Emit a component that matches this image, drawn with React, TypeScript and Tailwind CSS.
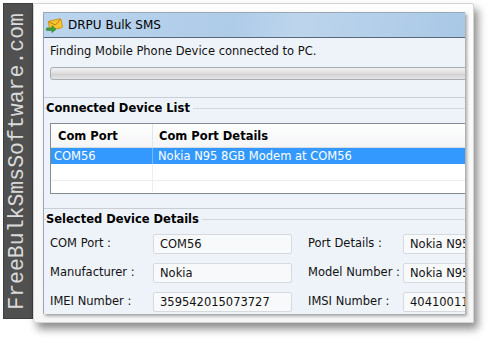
// DRPU Bulk SMS: device detection dialog, shown in a framed screenshot card
// with the vertical site watermark strip on the left.

const UI_FONT = "font-['DejaVu_Sans',Verdana,sans-serif]";

const DETAILS = [
  { left: 'COM Port :', leftValue: 'COM56', right: 'Port Details :', rightValue: 'Nokia N95' },
  { left: 'Manufacturer :', leftValue: 'Nokia', right: 'Model Number :', rightValue: 'Nokia N95' },
  { left: 'IMEI Number :', leftValue: '359542015073727', right: 'IMSI Number :', rightValue: '40410011' },
];

function AppIcon() {
  return (
    <svg width="17" height="15" viewBox="0 0 17 15" className="shrink-0">
      <g transform="rotate(-12 9 7)">
        <rect x="3" y="2" width="13" height="9" rx="1" fill="#f7c531" stroke="#c98a10" strokeWidth="0.8" />
        <path d="M3.4 2.4 L9.5 7.2 L15.6 2.4" fill="none" stroke="#b87a0c" strokeWidth="0.9" />
      </g>
      <path d="M0.5 10 H6 V7.6 L10 11.2 L6 14.6 V12.4 H0.5 Z" fill="#3fa43a" stroke="#2a7a26" strokeWidth="0.6" />
    </svg>
  );
}

function GroupTitle({ children }: { children: string }) {
  return (
    <div className="relative h-[22px]">
      <div className="absolute left-0 right-0 top-0 h-px bg-[#c9ced6]" />
      <div className="absolute left-0 right-0 top-[11px] h-px bg-[#d3d7de]" />
      <span className="absolute left-[2px] top-[3px] bg-[#eef3fa] pr-[3px] text-[11.5px] font-bold leading-[16px] text-black">
        {children}
      </span>
    </div>
  );
}

function Field({ value, width }: { value: string; width: string }) {
  return (
    <div className={`h-[20px] ${width} shrink-0 rounded-[2px] border border-[#d6dae0] bg-[#f8f9fb] pl-[6px] text-[11.5px] leading-[18px] text-[#111] whitespace-nowrap overflow-hidden`}>
      {value}
    </div>
  );
}

function Window() {
  return (
    <div className={`w-[422px] h-[302px] shrink-0 overflow-hidden border-l border-t border-[#9aa7b5] bg-[#eef3fa] shadow-[2px_2px_3px_rgba(0,0,0,0.35)] ${UI_FONT}`}>
      <div className="h-[25px] flex items-center gap-[5px] pl-[2px] border-b border-[#56687a] bg-[linear-gradient(100deg,#bcd5ee_0%,#aecbe8_45%,#bdd5ec_60%,#a9c8e6_100%)]">
        <AppIcon />
        <span className="text-[12px] leading-none text-black">DRPU Bulk SMS</span>
      </div>

      <div className="px-[6px] pt-[5px] h-[21px] text-[11.5px] leading-[16px] text-[#111] whitespace-nowrap">
        Finding Mobile Phone Device connected to PC.
      </div>

      <div className="ml-[6px] mt-[8px] h-[13px] w-[430px] rounded-[3px] border border-[#a8adb5] bg-[linear-gradient(#f2f2f2,#dcdcdc_50%,#cfcfcf_51%,#e4e4e4)]" />

      <div className="mt-[17px]">
        <GroupTitle>Connected Device List</GroupTitle>
      </div>

      <div className="ml-[6px] mt-[4px] w-[430px] h-[71px] border border-[#858b94] bg-white text-[11.5px] whitespace-nowrap">
        <div className="flex h-[24px] border-b border-[#d9dce1] bg-[linear-gradient(#ffffff,#f4f5f7)] font-bold text-black">
          <div className="w-[102px] pl-[7px] leading-[24px] border-r border-[#e3e5e8]">Com Port</div>
          <div className="flex-1 pl-[6px] leading-[24px]">Com Port Details</div>
        </div>
        <div className="flex h-[16px] bg-[#3399ff] text-white">
          <div className="w-[102px] pl-[3px] leading-[16px] border-r border-[#79b8f5]">COM56</div>
          <div className="flex-1 pl-[5px] leading-[16px]">Nokia N95 8GB Modem at COM56</div>
        </div>
        <div className="flex h-[17px] border-b border-[#eeeeee]">
          <div className="w-[102px] border-r border-[#eeeeee]" />
        </div>
        <div className="flex h-[11px]">
          <div className="w-[102px] border-r border-[#eeeeee]" />
        </div>
      </div>

      <div className="mt-[14px]">
        <GroupTitle>Selected Device Details</GroupTitle>
      </div>

      <div className="flex flex-col gap-[9px] mt-[4px] text-[11.5px] text-[#111]">
        {DETAILS.map((row) => (
          <div key={row.left} className="flex items-center h-[20px] whitespace-nowrap">
            <span className="w-[109px] pl-[6px] shrink-0">{row.left}</span>
            <Field value={row.leftValue} width="w-[139px]" />
            <span className="w-[111px] pl-[16px] shrink-0">{row.right}</span>
            <Field value={row.rightValue} width="w-[120px]" />
          </div>
        ))}
      </div>
    </div>
  );
}

export default function App() {
  return (
    <div className="w-[493px] h-[343px] bg-white flex items-start overflow-hidden">
      <div className="ml-[3px] mt-[3px] w-[30px] h-[316px] shrink-0 bg-[#505050] border border-[#3e3e3e] flex items-center justify-center">
        <span className="[writing-mode:vertical-rl] rotate-180 font-['Liberation_Mono',monospace] text-[21.5px] leading-none text-[#dadada] whitespace-nowrap">
          FreeBulkSmsSoftware.com
        </span>
      </div>
      <div className="mt-[3px] w-[441px] h-[320px] shrink-0 rounded-[2px] border border-[#d4d4d4] bg-[linear-gradient(#fdfdfd,#f6f6f6)] pl-[9px] pt-[8px] shadow-[4px_6px_8px_rgba(0,0,0,0.45)]">
        <Window />
      </div>
    </div>
  );
}
